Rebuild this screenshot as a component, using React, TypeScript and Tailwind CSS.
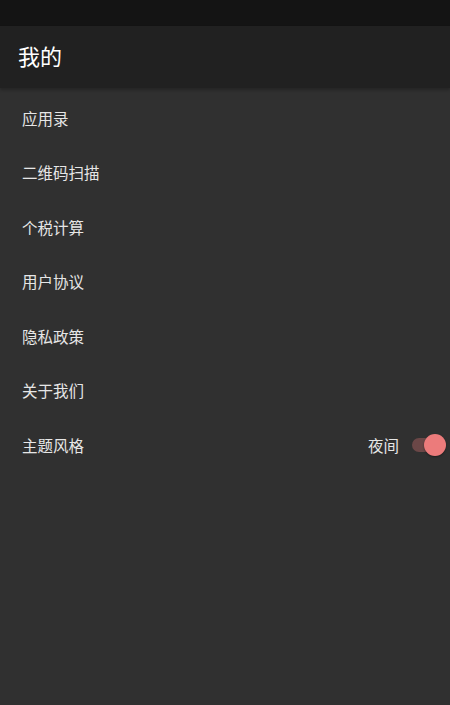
import React from "react";

const items = ["应用录", "二维码扫描", "个税计算", "用户协议", "隐私政策", "关于我们"];

export default function App() {
  return (
    <div
      className="w-[450px] h-[705px] bg-[#303030] flex flex-col"
      style={{ fontFamily: '"Noto Sans CJK SC", "Noto Sans", sans-serif' }}
    >
      <div className="h-[26px] bg-[#141414]" />
      <div className="h-[62px] bg-[#212121] flex items-center pl-[18px] pb-[3px] text-[22px] text-white shadow-[0_2px_3px_rgba(0,0,0,0.25)]">
        我的
      </div>
      <div className="flex flex-col pt-[3px]">
        {items.map((t) => (
          <div key={t} className="h-[54.5px] flex items-center pl-[22px] text-[15.5px] text-[#e6e6e6]">
            {t}
          </div>
        ))}
        <div className="h-[54.5px] flex items-center pl-[22px] pr-[4px] text-[15.5px] text-[#e6e6e6]">
          <span className="flex-1">主题风格</span>
          <span className="mr-[13px]">夜间</span>
          <div className="relative w-[34px] h-[22px] flex items-center">
            <div className="w-[30px] h-[14px] rounded-full bg-[#6b4747] ml-0" />
            <div className="absolute right-0 top-0 w-[22px] h-[22px] rounded-full bg-[#ec7b7b] shadow-[0_1px_2px_rgba(0,0,0,0.4)]" />
          </div>
        </div>
      </div>
    </div>
  );
}
